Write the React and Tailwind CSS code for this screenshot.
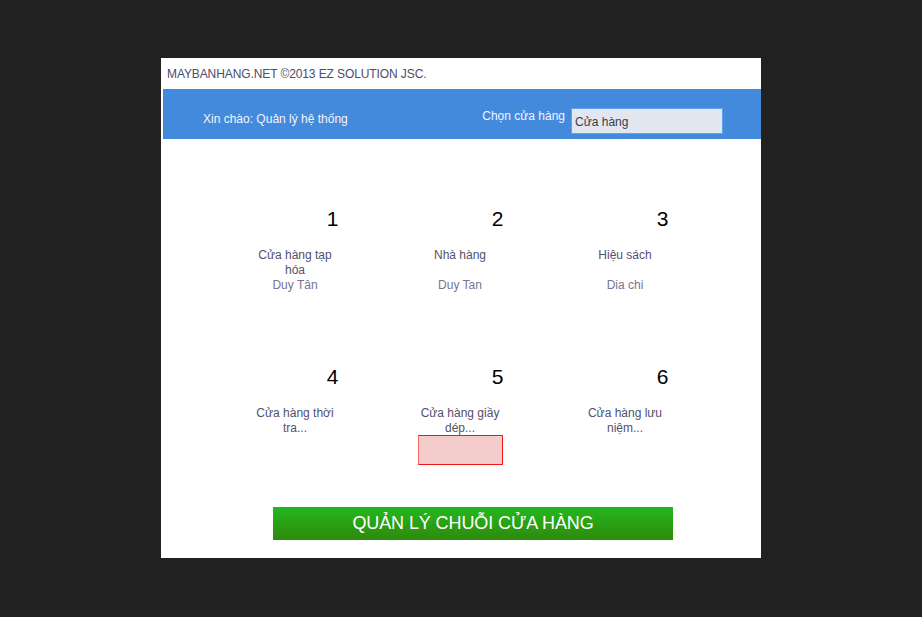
import React from "react";

const stores = [
  { n: 1, name: "Cửa hàng tạp hóa", addr: "Duy Tân" },
  { n: 2, name: "Nhà hàng", addr: "Duy Tan" },
  { n: 3, name: "Hiệu sách", addr: "Dia chi" },
  { n: 4, name: "Cửa hàng thời tra...", addr: "" },
  { n: 5, name: "Cửa hàng giầy dép...", addr: "", error: true },
  { n: 6, name: "Cửa hàng lưu niệm...", addr: "" },
];

export default function App() {
  return (
    <div
      className="min-h-screen w-full bg-[#212121] flex justify-center pt-[58px]"
      style={{ fontFamily: '"Liberation Sans", Arial, sans-serif', minHeight: 617 }}
    >
      <div className="w-[600px] h-[500px] bg-white flex flex-col">
        <div className="h-[31px] pl-[6px] flex items-center text-[12px] text-[#4d4c6a] pt-[1px] tracking-[-0.1px]">
          MAYBANHANG.NET ©2013 EZ SOLUTION JSC.
        </div>
        <div className="ml-[2px] h-[50px] bg-[#448adc] flex items-start">
          <div className="pl-[40px] pt-[23px] text-[12px] leading-[14px] text-[#f2f4ff]">
            Xin chào: Quản lý hệ thống
          </div>
          <div className="ml-auto flex items-start mr-[38px]">
            <div className="pt-[20px] text-[12px] leading-[14px] text-[#f2f4ff]">
              Chọn cửa hàng
            </div>
            <div className="ml-[6px] mt-[19px] w-[152px] h-[26px] bg-[#e2e7ef] border border-[#5ea3f2] flex items-center pl-[3px] pt-[1px] text-[12px] text-[#3a3a4a]">
              Cửa hàng
            </div>
          </div>
        </div>
        <div className="mt-[68px] pr-[2px] grid grid-cols-[repeat(3,85px)] gap-x-[80px] gap-y-[58px] justify-center">
          {stores.map((s) => (
            <div key={s.n} className="w-[85px] h-[100px] flex flex-col">
              <div className="h-[24px] -mr-[1px] text-[21px] leading-[24px] text-right text-black">
                {s.n}
              </div>
              <div className="mt-[17px] h-[30px] text-center text-[12px] leading-[15px] text-[#52516c]">
                {s.name}
              </div>
              <div
                className={
                  s.error
                    ? "-mt-[1px] h-[30px] bg-[#f4cccc] border border-[#f21818] border-l-[#f86a6a]"
                    : "h-[29px] text-center text-[12px] leading-[15px] text-[#7a7490]"
                }
              >
                {s.addr}
              </div>
            </div>
          ))}
        </div>
        <div className="mt-[42px] ml-[112px] w-[400px] h-[33px] bg-gradient-to-b from-[#22b81f] to-[#2d8a0b] flex items-center justify-center text-white text-[18px] tracking-[-0.1px]">
          QUẢN LÝ CHUỖI CỬA HÀNG
        </div>
      </div>
    </div>
  );
}
